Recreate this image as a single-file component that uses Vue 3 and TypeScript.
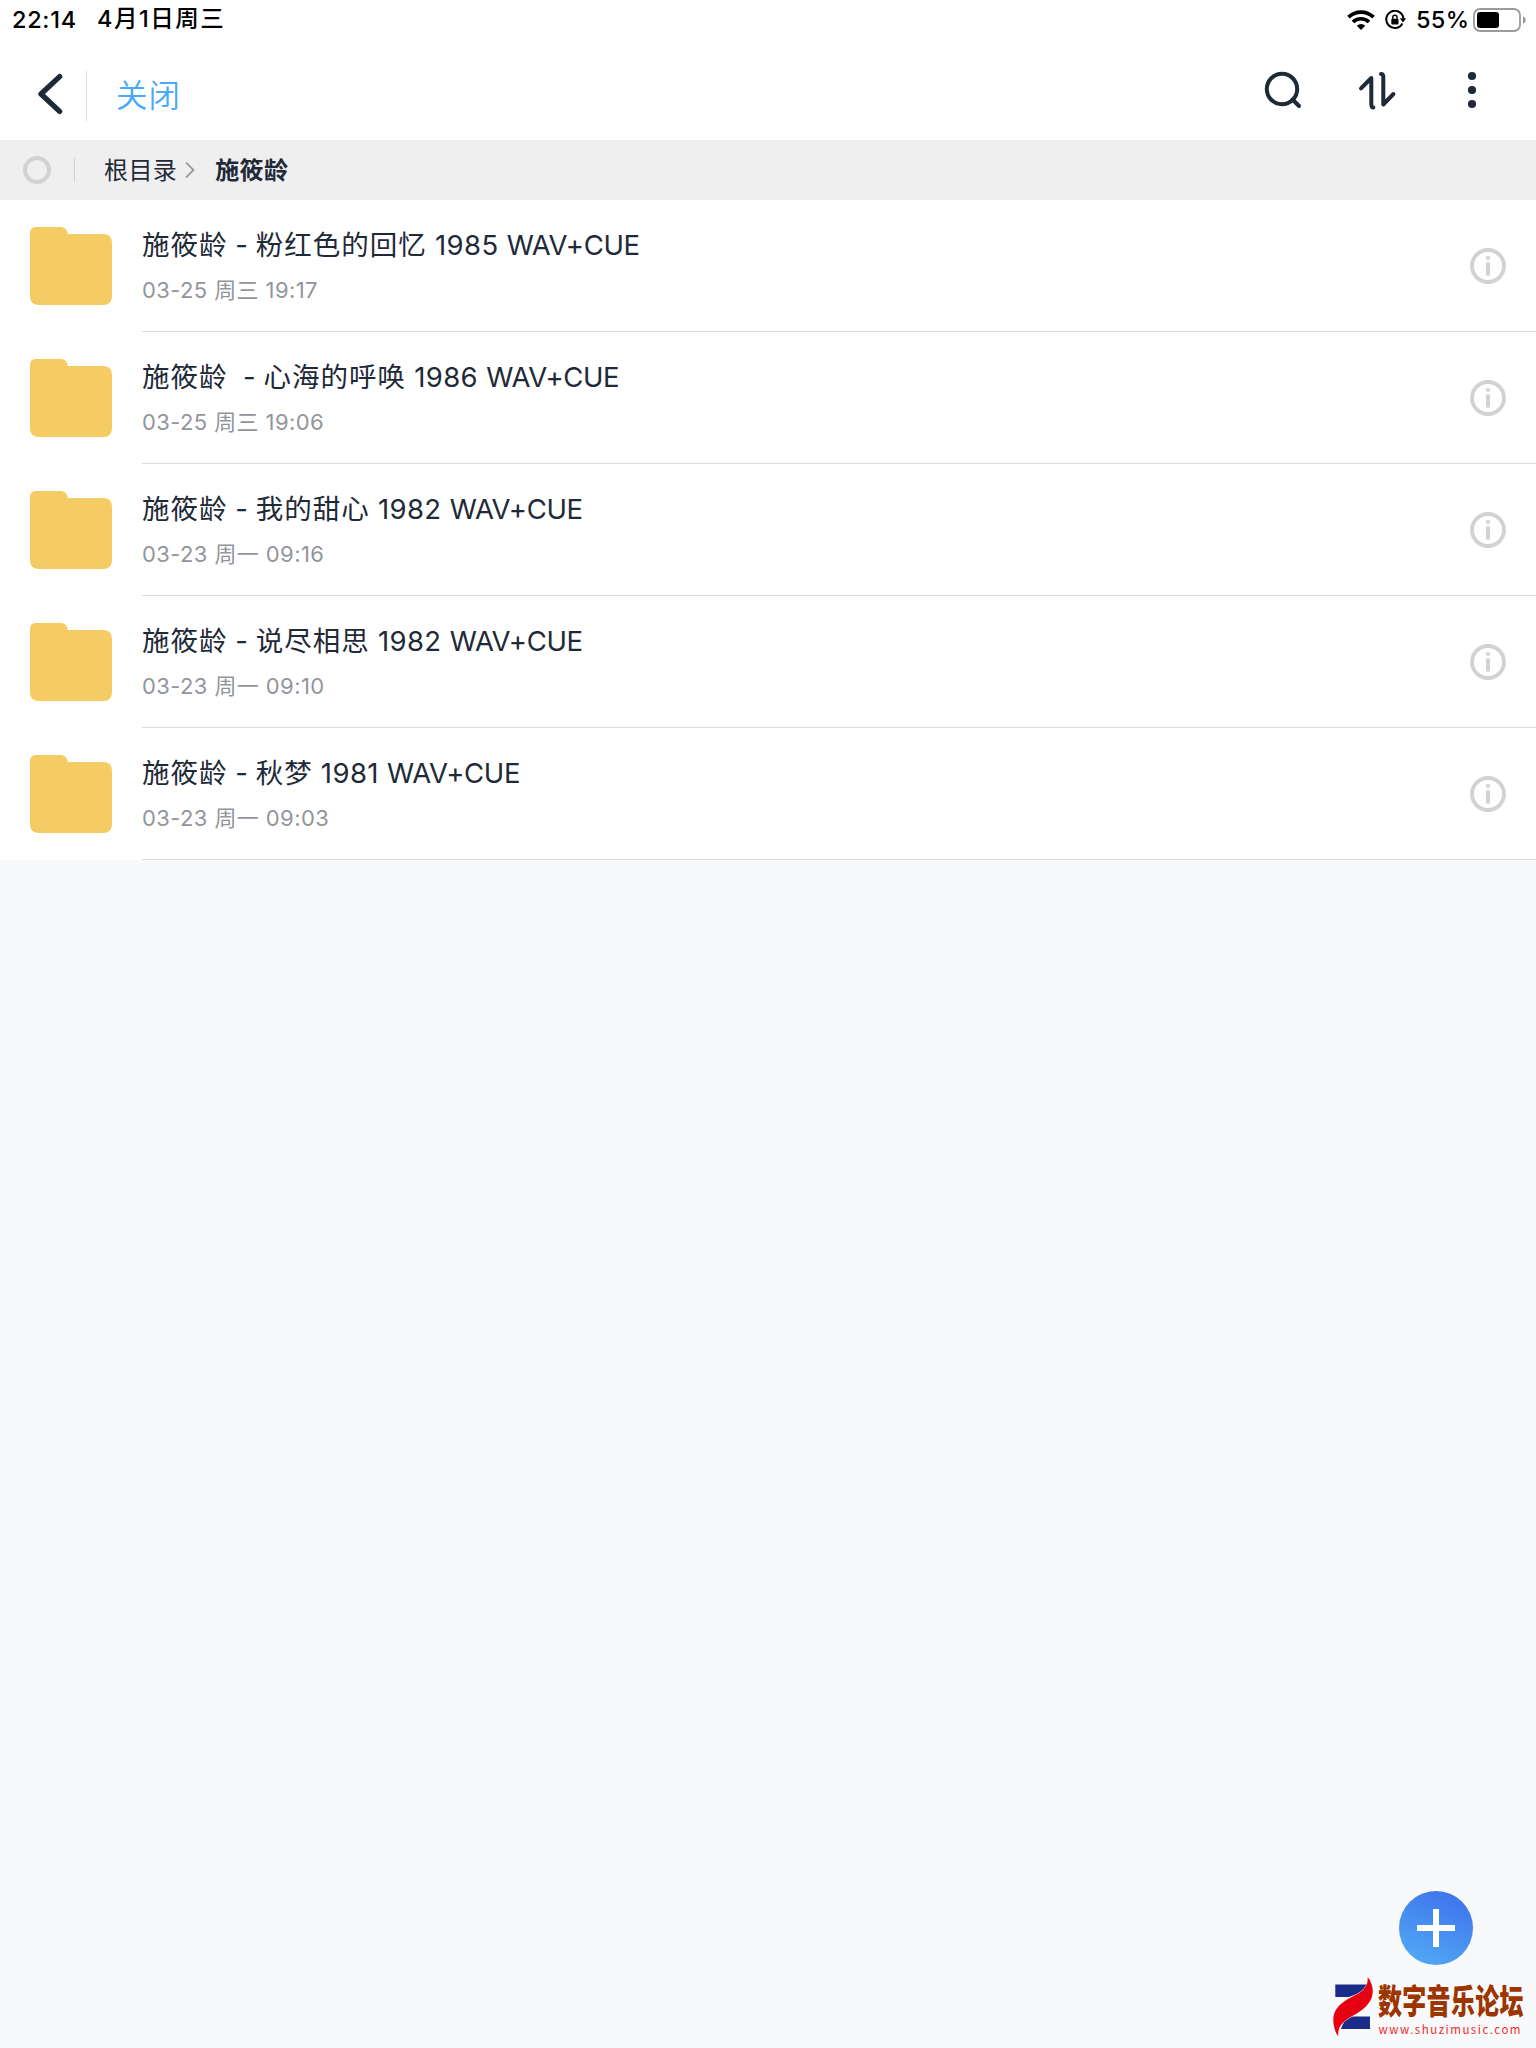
<script setup lang="ts">
interface Folder {
  artist: string
  gap: string
  album: string
  year: string
  date: string
  day: string
  time: string
}

const format = 'WAV+CUE'

const folders: Folder[] = [
  { artist: '施筱龄', gap: ' - ', album: '粉红色的回忆', year: ' 1985 ', date: '03-25', day: '周三', time: '19:17' },
  { artist: '施筱龄', gap: '  - ', album: '心海的呼唤', year: ' 1986 ', date: '03-25', day: '周三', time: '19:06' },
  { artist: '施筱龄', gap: ' - ', album: '我的甜心', year: ' 1982 ', date: '03-23', day: '周一', time: '09:16' },
  { artist: '施筱龄', gap: ' - ', album: '说尽相思', year: ' 1982 ', date: '03-23', day: '周一', time: '09:10' },
  { artist: '施筱龄', gap: ' - ', album: '秋梦', year: ' 1981 ', date: '03-23', day: '周一', time: '09:03' },
]
</script>

<template>
  <div class="screen">
    <div class="status">
      <span class="clock">22:14</span>
      <span class="today">4月1日周三</span>
      <svg class="wifi" width="28" height="20" viewBox="0 0 28 20">
        <g fill="none" stroke="#000" stroke-width="3.7">
          <path d="M1.5 7.2a18 18 0 0 1 25 0" />
          <path d="M6 12a11.5 11.5 0 0 1 16 0" />
        </g>
        <path d="M14 20l-4.2-4.3a6.2 6.2 0 0 1 8.4 0z" />
      </svg>
      <svg class="lock" width="22" height="20" viewBox="0 0 22 20">
        <path d="M17.4 13.5A8.6 8.6 0 1 1 18.4 8.4" fill="none" stroke="#000" stroke-width="2" />
        <path d="M14.8 8.2h6.4l-3.2 4.3z" />
        <rect x="6.3" y="8.8" width="7.2" height="5.6" rx="1" />
        <path d="M7.8 9V7.4a2.1 2.1 0 0 1 4.2 0V9" fill="none" stroke="#000" stroke-width="1.4" />
      </svg>
      <span class="percent">55%</span>
      <svg class="battery" width="54" height="24" viewBox="0 0 54 24">
        <rect x="1" y="1" width="46" height="22" rx="6" fill="none" stroke="#9b9b9b" stroke-width="1.8" />
        <rect x="4" y="4" width="22" height="16" rx="3" />
        <path d="M50 8.4c3.6 1 3.6 6.4 0 7.4z" fill="#9b9b9b" />
      </svg>
    </div>

    <header class="nav">
      <svg class="back" width="26" height="44" viewBox="0 0 26 44">
        <path d="M22.6 4.6L4 22l18.600 17.400" fill="none" stroke="#1f2a38" stroke-width="5.4" stroke-linecap="round" stroke-linejoin="round" />
      </svg>
      <i class="nav-line"></i>
      <span class="close">关闭</span>
      <svg class="tools" width="220" height="44" viewBox="0 0 220 44" fill="none" stroke="#1f2a38" stroke-width="4" stroke-linecap="round" stroke-linejoin="round">
        <circle cx="22" cy="21" r="15.2" />
        <path d="M32.5 31.5l6.500 6.500" />
        <path d="M101 20.3L111.300 10v26q0 3.500 2 3.500" />
        <path d="M121 6q2.300 0 2.300 3v27.500L133.400 26" />
        <g fill="#1f2a38" stroke="none">
          <circle cx="212" cy="8" r="4.1" />
          <circle cx="212" cy="22" r="4.1" />
          <circle cx="212" cy="36" r="4.1" />
        </g>
      </svg>
    </header>

    <div class="crumbs">
      <i class="ring"></i>
      <i class="crumb-line"></i>
      <span class="crumb">根目录</span>
      <svg class="chevron" width="10" height="18" viewBox="0 0 10 18">
        <path d="M1 1.500L8.500 9L1 16.500" fill="none" stroke="#999c9f" stroke-width="1.8" />
      </svg>
      <span class="crumb current">施筱龄</span>
    </div>

    <ul class="list">
      <li v-for="(f, i) in folders" :key="i" class="row">
        <svg class="folder" width="82" height="78" viewBox="0 0 82 78">
          <path d="M6 0H31q5.500 0 7 7H73q9 0 9 9V69q0 9-9 9H9q-9 0-9-9V6q0-6 6-6z" fill="#f5cb63" />
        </svg>
        <div class="body">
          <div class="text">
            <div class="title"><span class="han">{{ f.artist }}</span><span>{{ f.gap }}</span><span class="han">{{ f.album }}</span><span class="year">{{ f.year }}</span><span class="format">{{ format }}</span></div>
            <div class="meta">{{ f.date }} {{ f.day }} {{ f.time }}</div>
          </div>
          <svg class="info" width="36" height="36" viewBox="0 0 36 36">
            <circle cx="18" cy="18" r="16" fill="none" stroke="#d0d2d4" stroke-width="3.8" />
            <circle cx="18" cy="10" r="2.1" fill="#d0d2d4" />
            <path d="M18 16v10" stroke="#d0d2d4" stroke-width="4" stroke-linecap="round" />
          </svg>
        </div>
      </li>
    </ul>

    <button class="add" aria-label="add">
      <svg width="38" height="38" viewBox="0 0 38 38">
        <path d="M19 0v38M0 19h38" stroke="#fff" stroke-width="6" />
      </svg>
    </button>

    <svg class="brand" width="200" height="70" viewBox="0 0 200 70">
      <path d="M2.300 9.500H35L30 17Q21 20 16 22H2.300z" fill="#1b2b88" />
      <path d="M37 41.500V54H8Q10 46 17 41.500z" fill="#1b2b88" />
      <path d="M34.500 2Q36 11 27 17.500C16 24 0 29 .3 46Q1 56 5.300 61.500C4 50 12 45 23 39C37 31 43 20 38 8Q37 4.500 34.500 2z" fill="#e60012" stroke="#f8f9fb" stroke-width="1" paint-order="stroke" />
      <g transform="translate(45 38.800) scale(1 1.430)">
        <text class="brand-name" x="0" y="0" textLength="145.500" lengthAdjust="spacing">数字音乐论坛</text>
      </g>
      <text class="brand-url" x="45.500" y="59" textLength="142" lengthAdjust="spacing">www.shuzimusic.com</text>
    </svg>
  </div>
</template>

<style>
body {
  background: #f8f9fb;
}
</style>

<style scoped>
.screen {
  position: relative;
  height: 2048px;
  background: #f8f9fb;
  color: #1f2a38;
  font-family: Inter, "Noto Sans CJK SC", sans-serif;
}
.status {
  display: flex;
  align-items: center;
  height: 40px;
  padding: 0 9px 0 12px;
  box-sizing: border-box;
  background: #fff;
  color: #000;
  font-size: 23.5px;
  line-height: 36px;
  font-weight: 500;
}
.clock {
  width: 85px;
  margin-bottom: 1px;
  letter-spacing: 0.7px;
}
.today {
  flex: 1;
  margin-bottom: 2px;
  letter-spacing: 1.5px;
}
.wifi {
  margin-right: 10px;
}
.lock {
  margin-right: 9px;
}
.percent {
  width: 57px;
  margin-bottom: 1px;
  white-space: nowrap;
  letter-spacing: 0.3px;
}
.nav {
  display: flex;
  align-items: center;
  height: 100px;
  padding: 0 56px 0 37px;
  box-sizing: border-box;
  background: #fff;
}
.back {
  margin-top: 8px;
}
.nav-line {
  width: 1px;
  height: 50px;
  margin: 12px 29px 0 23px;
  background: #dcdde0;
}
.close {
  flex: 1;
  margin-top: 12px;
  font-size: 31.5px;
  line-height: 40px;
  font-weight: 350;
  letter-spacing: 1px;
  color: #49a9fc;
}
.tools {
  margin: 0;
}
.crumbs {
  display: flex;
  align-items: center;
  height: 60px;
  padding-left: 23px;
  background: #efefef;
}
.ring {
  width: 28px;
  height: 28px;
  box-sizing: border-box;
  border: 4px solid #d0d2d4;
  border-radius: 50%;
}
.crumb-line {
  width: 1px;
  height: 24px;
  margin: 0 29px 0 23px;
  background: #cfd1d3;
}
.crumb {
  margin-top: 2px;
  font-size: 24px;
  line-height: 36px;
  letter-spacing: 0.4px;
}
.chevron {
  margin: 0 20px 0 8px;
}
.current {
  font-weight: 700;
}
.list {
  margin: 0;
  padding: 0;
  list-style: none;
  background: #fff;
}
.row {
  display: flex;
  height: 132px;
  padding-left: 30px;
}
.folder {
  margin: 27px 30px 0 0;
}
.body {
  display: flex;
  flex: 1;
  align-items: center;
  box-sizing: border-box;
  padding-right: 30px;
  border-bottom: 1px solid #d9dadb;
}
.text {
  flex: 1;
}
.title {
  font-size: 27.5px;
  line-height: 40px;
  white-space: pre;
}
.han {
  letter-spacing: 1.02px;
}
.year {
  letter-spacing: 0.4px;
}
.format {
  letter-spacing: -0.35px;
}
.meta {
  margin-top: 9px;
  font-size: 22px;
  line-height: 32px;
  letter-spacing: 0.4px;
  color: #91969c;
}
.info {
  flex: none;
}
.add {
  position: absolute;
  left: 1399px;
  top: 1891px;
  display: flex;
  align-items: center;
  justify-content: center;
  width: 74px;
  height: 74px;
  padding: 0;
  border: 0;
  border-radius: 50%;
  background: linear-gradient(25deg, #50a8f4 10%, #3f74ec 90%);
}
.brand {
  position: absolute;
  left: 1333px;
  top: 1975px;
  overflow: visible;
}
.brand-name {
  font: 900 24px "Noto Sans CJK SC", sans-serif;
  fill: #9c3500;
}
.brand-url {
  font: 400 11.5px "Noto Sans CJK SC", sans-serif;
  fill: #f52a2a;
}
</style>
